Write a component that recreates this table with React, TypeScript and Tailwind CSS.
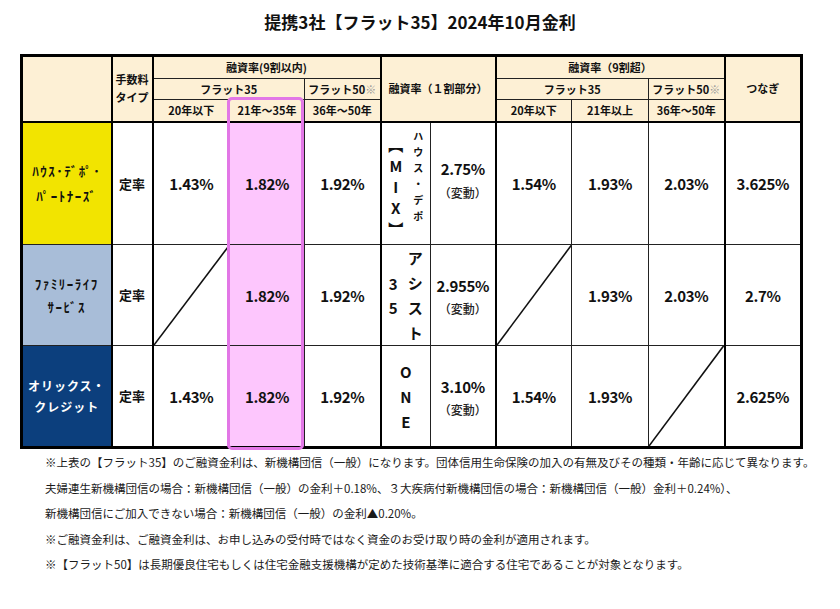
const hd = "bg-[#fdf0d5] border border-[#222] text-[11px] font-bold text-[#111] text-center align-middle p-0 leading-none";
const td = "border border-[#222] text-center align-middle p-0";
const pct = "text-[15px] font-semibold text-[#111] tracking-tight";

function Slash() {
  return (
    <svg className="absolute inset-0 h-full w-full" preserveAspectRatio="none">
      <line x1="0" y1="100%" x2="100%" y2="0" stroke="#111" strokeWidth="1.6" />
    </svg>
  );
}

function Vert({ chars, size, gap }: { chars: string[]; size: string; gap: string }) {
  return (
    <div className={`flex flex-col items-center ${gap}`}>
      {chars.map((c, i) => (
        <span key={i} className={`${size} font-bold leading-none text-[#111]`}>
          {c}
        </span>
      ))}
    </div>
  );
}

function Rate({ v }: { v: string }) {
  return (
    <div className="flex flex-col items-center gap-[6px]">
      <span className={pct}>{v}</span>
      <span className="text-[12px] font-medium leading-none text-[#222]">（変動）</span>
    </div>
  );
}

export default function App() {
  return (
    <div className="w-[840px] h-[609px] bg-white font-['Noto_Sans_CJK_JP',sans-serif] text-[#111]">
      <h1 className="pt-[10px] text-center text-[17px] font-bold leading-[24px] text-[#111]">
        提携3社【フラット35】2024年10月金利
      </h1>

      <div className="relative ml-[20px] mt-[20px] w-[780px]">
        <table className="w-[780px] table-fixed border-collapse border-[3px] border-black">
          <colgroup>
            <col className="w-[90px]" />
            <col className="w-[41px]" />
            <col className="w-[77px]" />
            <col className="w-[75px]" />
            <col className="w-[76px]" />
            <col className="w-[50px]" />
            <col className="w-[65px]" />
            <col className="w-[76px]" />
            <col className="w-[77px]" />
            <col className="w-[76px]" />
            <col className="w-[77px]" />
          </colgroup>
          <thead>
            <tr className="h-[23px]">
              <th rowSpan={3} className={`${hd} border-r-2 border-r-black`}></th>
              <th rowSpan={3} className={`${hd} border-r-2 border-r-black`}>
                <div className="flex flex-col gap-[7px] leading-none">
                  <span>手数料</span>
                  <span>タイプ</span>
                </div>
              </th>
              <th colSpan={3} className={hd}>融資率(9割以内)</th>
              <th colSpan={2} rowSpan={3} className={`${hd} border-x-2 border-x-black`}>
                融資率（１割部分）
              </th>
              <th colSpan={3} className={hd}>融資率（9割超）</th>
              <th rowSpan={3} className={`${hd} border-l-2 border-l-black`}>つなぎ</th>
            </tr>
            <tr className="h-[21px]">
              <th colSpan={2} className={hd}>フラット35</th>
              <th className={hd}>
                フラット50<span className="text-[#999]">※</span>
              </th>
              <th colSpan={2} className={hd}>フラット35</th>
              <th className={hd}>
                フラット50<span className="text-[#999]">※</span>
              </th>
            </tr>
            <tr className="h-[22px]">
              <th className={hd}>20年以下</th>
              <th className={hd}>21年～35年</th>
              <th className={hd}>36年～50年</th>
              <th className={hd}>20年以下</th>
              <th className={hd}>21年以上</th>
              <th className={hd}>36年～50年</th>
            </tr>
          </thead>
          <tbody>
            <tr className="h-[123px] border-t-2 border-t-black">
              <td className={`${td} bg-[#f2e400] border-r-2 border-r-black`}>
                <div className="flex flex-col items-center gap-[12px] text-[13px] font-bold leading-none text-[#111] tracking-[1.5px]">
                  <span>ﾊｳｽ･ﾃﾞﾎﾟ･</span>
                  <span>ﾊﾟｰﾄﾅｰｽﾞ</span>
                </div>
              </td>
              <td className={`${td} border-r-2 border-r-black text-[13px] font-bold`}>定率</td>
              <td className={td}><span className={pct}>1.43%</span></td>
              <td className={`${td} bg-[#fdc6fd]`}><span className={pct}>1.82%</span></td>
              <td className={`${td} border-r-2 border-r-black`}><span className={pct}>1.92%</span></td>
              <td className={td}>
                <div className="flex items-start justify-center gap-[10px]">
                  <div className="pt-[6px]">
                    <Vert chars={["︻", "M", "I", "X", "︼"]} size="text-[15px]" gap="gap-[6px]" />
                  </div>
                  <Vert chars={["ハ", "ウ", "ス", "・", "デ", "ポ"]} size="text-[10px]" gap="gap-[6px]" />
                </div>
              </td>
              <td className={`${td} border-r-2 border-r-black`}>
                <div className="-mt-[10px]"><Rate v="2.75%" /></div>
              </td>
              <td className={td}><span className={pct}>1.54%</span></td>
              <td className={td}><span className={pct}>1.93%</span></td>
              <td className={`${td} border-r-2 border-r-black`}><span className={pct}>2.03%</span></td>
              <td className={td}><span className={pct}>3.625%</span></td>
            </tr>
            <tr className="h-[101px]">
              <td className={`${td} bg-[#a8bdd8] border-r-2 border-r-black`}>
                <div className="flex flex-col items-center gap-[10px] text-[13px] font-bold leading-none text-[#111] tracking-[1.5px]">
                  <span>ﾌｧﾐﾘｰﾗｲﾌ</span>
                  <span>ｻｰﾋﾞｽ</span>
                </div>
              </td>
              <td className={`${td} border-r-2 border-r-black text-[13px] font-bold`}>定率</td>
              <td className={`${td} relative`}><Slash /></td>
              <td className={`${td} bg-[#fdc6fd]`}><span className={pct}>1.82%</span></td>
              <td className={`${td} border-r-2 border-r-black`}><span className={pct}>1.92%</span></td>
              <td className={td}>
                <div className="flex items-center justify-center gap-[10px]">
                  <Vert chars={["3", "5"]} size="text-[15px]" gap="gap-[9px]" />
                  <Vert chars={["ア", "シ", "ス", "ト"]} size="text-[15px]" gap="gap-[10px]" />
                </div>
              </td>
              <td className={`${td} border-r-2 border-r-black`}><Rate v="2.955%" /></td>
              <td className={`${td} relative`}><Slash /></td>
              <td className={td}><span className={pct}>1.93%</span></td>
              <td className={`${td} border-r-2 border-r-black`}><span className={pct}>2.03%</span></td>
              <td className={td}><span className={pct}>2.7%</span></td>
            </tr>
            <tr className="h-[102px]">
              <td className={`${td} bg-[#0c3f7d] border-r-2 border-r-black`}>
                <div className="flex flex-col items-center gap-[9px] text-[12px] font-bold leading-none text-white tracking-[1px]">
                  <span>オリックス・</span>
                  <span>クレジット</span>
                </div>
              </td>
              <td className={`${td} border-r-2 border-r-black text-[13px] font-bold`}>定率</td>
              <td className={td}><span className={pct}>1.43%</span></td>
              <td className={`${td} bg-[#fdc6fd]`}><span className={pct}>1.82%</span></td>
              <td className={`${td} border-r-2 border-r-black`}><span className={pct}>1.92%</span></td>
              <td className={td}>
                <Vert chars={["O", "N", "E"]} size="text-[15px]" gap="gap-[10px]" />
              </td>
              <td className={`${td} border-r-2 border-r-black`}><Rate v="3.10%" /></td>
              <td className={td}><span className={pct}>1.54%</span></td>
              <td className={td}><span className={pct}>1.93%</span></td>
              <td className={`${td} relative border-r-2 border-r-black`}><Slash /></td>
              <td className={td}><span className={pct}>2.625%</span></td>
            </tr>
          </tbody>
        </table>
        <div className="pointer-events-none absolute left-[207px] top-[43px] h-[353px] w-[77px] rounded-[5px] border-[3px] border-[#e277e6]" />
      </div>

      <div className="ml-[45px] mt-[1px] text-[11.5px] leading-[25.5px] text-[#1a1a1a]">
        <p>※上表の【フラット35】のご融資金利は、新機構団信（一般）になります。団体信用生命保険の加入の有無及びその種類・年齢に応じて異なります。</p>
        <p>夫婦連生新機構団信の場合：新機構団信（一般）の金利＋0.18%、３大疾病付新機構団信の場合：新機構団信（一般）金利＋0.24%）、</p>
        <p>新機構団信にご加入できない場合：新機構団信（一般）の金利▲0.20%。</p>
        <p>※ご融資金利は、ご融資金利は、お申し込みの受付時ではなく資金のお受け取り時の金利が適用されます。</p>
        <p>※【フラット50】は長期優良住宅もしくは住宅金融支援機構が定めた技術基準に適合する住宅であることが対象となります。</p>
      </div>
    </div>
  );
}
